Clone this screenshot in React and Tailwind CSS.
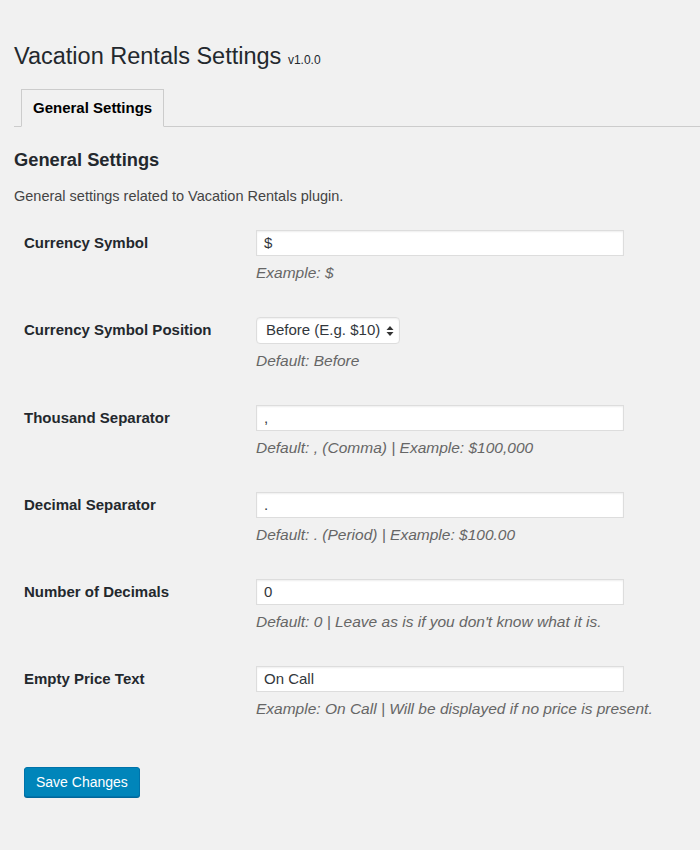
const fields = [
  { label: 'Currency Symbol', value: '$', help: 'Example: $' },
  { label: 'Currency Symbol Position', select: 'Before (E.g. $10)', help: 'Default: Before' },
  { label: 'Thousand Separator', value: ',', help: 'Default: , (Comma) | Example: $100,000' },
  { label: 'Decimal Separator', value: '.', help: 'Default: . (Period) | Example: $100.00' },
  { label: 'Number of Decimals', value: '0', help: "Default: 0 | Leave as is if you don't know what it is." },
  { label: 'Empty Price Text', value: 'On Call', help: 'Example: On Call | Will be displayed if no price is present.' },
];

const SortArrows = () => (
  <svg width="8" height="12" viewBox="0 0 8 12" className="ml-1.5">
    <path d="M4 1 L7.5 5 H0.5 Z" fill="#333" />
    <path d="M4 11 L7.5 7 H0.5 Z" fill="#333" />
  </svg>
);

const Row = ({ field }) => (
  <div className="flex items-start pl-[14px]">
    <div className="w-[242px] pl-[10px] h-[26px] flex items-center text-[15px] font-bold text-[#23282d]">
      {field.label}
    </div>
    <div>
      {field.select ? (
        <div className="h-[27px] w-[144px] flex items-center pl-[9px] bg-white border border-[#ddd] rounded-[4px] text-[15px] text-[#32373c] shadow-[inset_0_1px_2px_rgba(0,0,0,0.07)]">
          {field.select}
          <SortArrows />
        </div>
      ) : (
        <div className="h-[26px] w-[368px] flex items-center px-[7px] bg-white border border-[#ddd] text-[15px] text-[#32373c] shadow-[inset_0_1px_2px_rgba(0,0,0,0.07)]">
          {field.value}
        </div>
      )}
      <p className="mt-[7px] leading-[20px] text-[15.5px] italic text-[#666]">{field.help}</p>
    </div>
  </div>
);

export default function App() {
  return (
    <div className="min-h-[850px] bg-[#f1f1f1] font-['Liberation_Sans',Arial,sans-serif] text-[#444] pt-[38px]">
      <h1 className="pl-[14px] text-[23.5px] leading-[36px] text-[#23282d]">
        Vacation Rentals Settings <span className="text-[12px]">v1.0.0</span>
      </h1>
      <div className="ml-[14px] mt-[11px] flex border-b border-[#ccc]">
        <div className="ml-[7px] -mb-px px-[11px] h-[38px] flex items-center border border-[#ccc] border-b-[#f1f1f1] text-[15px] font-bold text-[#000]">
          General Settings
        </div>
      </div>
      <h2 className="pl-[14px] mt-[21px] text-[18.3px] font-bold leading-[24px] text-[#23282d]">General Settings</h2>
      <p className="pl-[14px] mt-[14px] text-[14.5px] leading-[20px] text-[#444]">
        General settings related to Vacation Rentals plugin.
      </p>
      <div className="mt-[24px] flex flex-col gap-[34px]">
        {fields.map((f) => (
          <Row key={f.label} field={f} />
        ))}
      </div>
      <div className="pl-[24px] mt-[48px]">
        <button className="h-[30px] px-[11px] bg-[#0085ba] border border-[#0073aa] rounded-[3px] text-white text-[14px] shadow-[0_1px_0_#006799]">
          Save Changes
        </button>
      </div>
    </div>
  );
}
